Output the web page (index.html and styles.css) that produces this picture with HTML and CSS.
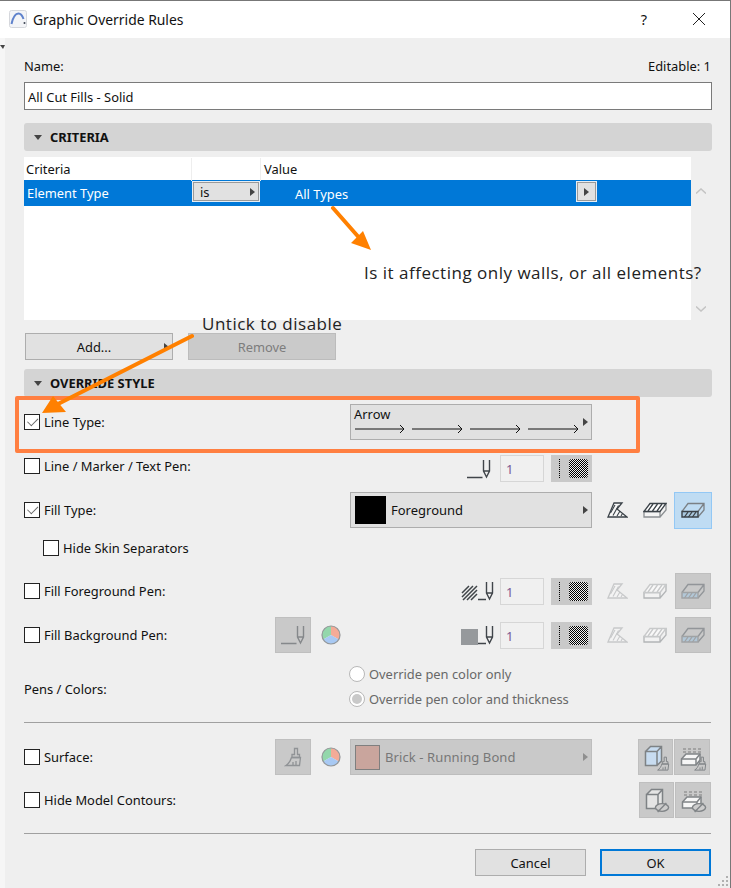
FILE: index.html
```html
<!DOCTYPE html>
<html lang="en">
<head>
<meta charset="utf-8">
<title>Graphic Override Rules</title>
<link rel="stylesheet" href="styles.css">
</head>
<body>
<svg class="sprite" aria-hidden="true">
  <symbol id="pen" viewBox="0 0 24 20">
    <path d="M0 18.500H15.500M16.500 1V12L19.500 18L22.500 12V1M16.500 12H22.500" fill="none" stroke="currentColor" stroke-width="1.400"/>
  </symbol>
  <symbol id="pen-short" viewBox="0 0 16 20">
    <path d="M0 18.500H8M8.500 1V12L11.500 18L14.500 12V1M8.500 12H14.500" fill="none" stroke="currentColor" stroke-width="1.400"/>
  </symbol>
  <symbol id="cut" viewBox="0 0 21 16">
    <path d="M1 15L7 1H15L10 7L20 15Z" fill="#fff" fill-opacity=".5" stroke="currentColor" stroke-width="1.300"/>
    <path d="M3.500 11L8 3M6 13.500L11.500 3.500M10 14L13 9M14 14L15.500 11.500" fill="none" stroke="currentColor" stroke-width="1.100"/>
  </symbol>
  <symbol id="top" viewBox="0 0 24 16">
    <path d="M1 9.500H17V15H1ZM17 15L23 8V1" fill="#f4f4f4" stroke="#8b8f92" stroke-width="1.300"/>
    <path d="M1 9.500L7 1.500H23L17 9.500Z" fill="#fff" stroke="currentColor" stroke-width="1.300"/>
    <path d="M5 9L10 2M9.500 9L14.500 2M14 9L19 2" stroke="currentColor" stroke-width="1.300"/>
  </symbol>
  <symbol id="front" viewBox="0 0 24 16">
    <path d="M1 9.500L7 1.500H23V8L17 15M17 9.500L23 1.500" fill="none" stroke="#7b8085" stroke-width="1.300"/>
    <path d="M1 9.500H17V15H1Z" fill="#a9c7dd" stroke="currentColor" stroke-width="1.400"/>
    <path d="M3.500 15L7 10M7.500 15L11 10M11.500 15L15 10" stroke="currentColor" stroke-width="1.300"/>
  </symbol>
  <symbol id="brush" viewBox="0 0 18 21">
    <path d="M10.500 1.500H13.500V7.500H15.500V10.500H8V7.500H10.500Z" fill="none" stroke="currentColor" stroke-width="1.300"/>
    <path d="M7.500 10.500H16.500L15.500 18.500H2C5 16.500 6.500 14 7.500 10.500ZM9 18V15M12 18V14" fill="none" stroke="currentColor" stroke-width="1.300"/>
  </symbol>
  <symbol id="wheel" viewBox="0 0 20 20">
    <path d="M10 10V1A9 9 0 0 0 2.200 14.500Z" fill="#8fd6a8"/>
    <path d="M10 10V1A9 9 0 0 1 17.800 14.500Z" fill="#f5a893"/>
    <path d="M10 10L2.200 14.500A9 9 0 0 0 17.800 14.500Z" fill="#a5c8f4"/>
    <circle cx="10" cy="10" r="9" fill="none" stroke="#8f9396" stroke-width="1.200"/>
  </symbol>
  <symbol id="cube" viewBox="0 0 24 24">
    <path d="M1.500 6.500L6.500 1.500H17.500V16L13 20.500H1.500Z" fill="currentColor"/>
    <path d="M1.500 6.500H13V20.500H1.500ZM1.500 6.500L6.500 1.500H17.500V16L13 20.500M13 6.500L17.500 1.500" fill="none" stroke="#7e8285" stroke-width="1.500"/>
  </symbol>
  <symbol id="slab" viewBox="0 0 24 24">
    <path d="M3 4H21M3 7H21" stroke="#a3a3a3" stroke-width="2" stroke-dasharray="3 2"/>
    <path d="M1.500 14L6 9H20V15L16 20H1.500Z" fill="#f6f6f6" stroke="#808487" stroke-width="1.500"/>
    <path d="M1.500 14H16V20M16 14L20 9" fill="none" stroke="#808487" stroke-width="1.500"/>
  </symbol>
  <symbol id="hide" viewBox="0 0 14 10">
    <ellipse cx="7" cy="5" rx="6" ry="3.500" fill="#cdcdcd" stroke="#808487" stroke-width="1.300"/>
    <path d="M3 9L11 1" stroke="#808487" stroke-width="1.300"/>
  </symbol>
</svg>

<div class="window">
  <header class="titlebar">
    <svg class="app-icon" viewBox="0 0 18 18"><rect x=".5" y=".5" width="17" height="17" rx="2" fill="#f3f4f7" stroke="#d5d7dc"/><path d="M2.500 14C4 7 7 3.500 9.500 3.500C12 3.500 13.500 6 14.500 9" fill="none" stroke="#5f82cc" stroke-width="2"/><circle cx="15.500" cy="13" r="1" fill="#3c4452"/></svg>
    <span class="title">Graphic Override Rules</span>
    <span class="help">?</span>
    <svg class="close" viewBox="0 0 14 14"><path d="M1 1L13 13M13 1L1 13" stroke="#222" stroke-width="1"/></svg>
  </header>

  <div class="body">
    <aside class="strip"><i class="strip-mark"></i></aside>
    <main class="content">
      <div class="name-row"><span>Name:</span><span>Editable: 1</span></div>
      <div class="text-field">All Cut Fills - Solid</div>

      <div class="section section-criteria"><i class="down"></i><b>CRITERIA</b></div>

      <div class="criteria">
        <div class="list">
          <div class="list-head">
            <span class="col-a">Criteria</span><span class="col-b"></span><span class="col-c">Value</span>
          </div>
          <div class="list-row">
            <span class="col-a">Element Type</span>
            <span class="cell-btn wide">is<i class="right"></i></span>
            <span class="value">All Types</span>
            <span class="cell-btn small"><i class="right"></i></span>
          </div>
        </div>
        <div class="scroll">
          <svg class="chev" viewBox="0 0 10 6"><path d="M0 5.500L5 1L10 5.500" fill="none" stroke="#c4c4c4" stroke-width="1.500"/></svg>
          <svg class="chev" viewBox="0 0 10 6"><path d="M0 .5L5 5L10 .5" fill="none" stroke="#c4c4c4" stroke-width="1.500"/></svg>
        </div>
      </div>

      <div class="list-actions">
        <div class="btn add">Add...<i class="right"></i></div>
        <div class="btn remove">Remove</div>
      </div>

      <div class="section section-override"><i class="down"></i><b>OVERRIDE STYLE</b></div>

      <div class="row row-line">
        <label class="check-label"><i class="check on"></i>Line Type:</label>
        <div class="main">
          <div class="select arrow-select">
            <div class="arrow-body">
              <span class="arrow-name">Arrow</span>
              <svg class="arrows" viewBox="0 0 224 9"><path d="M0 5H49M45 1L49 5L45 9M57 5H107M103 1L107 5L103 9M115 5H165M161 1L165 5L161 9M173 5H223M219 1L223 5L219 9" fill="none" stroke="#111" stroke-width="1"/></svg>
            </div>
            <i class="right"></i>
          </div>
        </div>
      </div>

      <div class="row row-pen">
        <label class="check-label"><i class="check"></i>Line / Marker / Text Pen:</label>
        <div class="main pen-tools">
          <svg class="ico-pen"><use href="#pen"/></svg>
          <span class="num">1</span>
          <span class="toggle"><i class="dots"></i><i class="checker"></i></span>
        </div>
      </div>

      <div class="row row-fill">
        <label class="check-label"><i class="check on"></i>Fill Type:</label>
        <div class="main">
          <div class="select"><i class="swatch black"></i><span class="select-text">Foreground</span><i class="right"></i></div>
        </div>
        <div class="tools">
          <span class="tool"><svg class="ico-cut"><use href="#cut"/></svg></span>
          <span class="tool"><svg class="ico-box"><use href="#top"/></svg></span>
          <span class="tool active"><svg class="ico-box"><use href="#front"/></svg></span>
        </div>
      </div>

      <div class="row-skin">
        <label class="check-label"><i class="check"></i>Hide Skin Separators</label>
      </div>

      <div class="row row-fg">
        <label class="check-label"><i class="check"></i>Fill Foreground Pen:</label>
        <div class="main pen-tools">
          <svg class="ico-hatch" viewBox="0 0 17 16"><path d="M1 8L8 1M1 12L12 1M2 15L16 1M6 15L16 5M10 15L16 9" stroke="#3f4448" stroke-width="1.500"/></svg>
          <svg class="ico-short"><use href="#pen-short"/></svg>
          <span class="num">1</span>
          <span class="toggle"><i class="dots"></i><i class="checker"></i></span>
        </div>
        <div class="tools dim">
          <span class="tool"><svg class="ico-cut"><use href="#cut"/></svg></span>
          <span class="tool"><svg class="ico-box"><use href="#top"/></svg></span>
          <span class="tool off"><svg class="ico-box"><use href="#front"/></svg></span>
        </div>
      </div>

      <div class="row row-bg">
        <label class="check-label"><i class="check"></i>Fill Background Pen:</label>
        <span class="tool off pen-btn"><svg class="ico-pen"><use href="#pen"/></svg></span>
        <svg class="wheel"><use href="#wheel"/></svg>
        <div class="main pen-tools">
          <i class="gray-box"></i>
          <svg class="ico-short"><use href="#pen-short"/></svg>
          <span class="num">1</span>
          <span class="toggle"><i class="dots"></i><i class="checker"></i></span>
        </div>
        <div class="tools dim">
          <span class="tool"><svg class="ico-cut"><use href="#cut"/></svg></span>
          <span class="tool"><svg class="ico-box"><use href="#top"/></svg></span>
          <span class="tool off"><svg class="ico-box"><use href="#front"/></svg></span>
        </div>
      </div>

      <div class="row row-pens">
        <span class="pens-label">Pens / Colors:</span>
        <div class="main radios">
          <label class="radio-label"><i class="radio"></i>Override pen color only</label>
          <label class="radio-label"><i class="radio on"></i>Override pen color and thickness</label>
        </div>
      </div>

      <hr class="rule rule-a">

      <div class="row row-surface">
        <label class="check-label"><i class="check"></i>Surface:</label>
        <span class="tool off pen-btn"><svg class="ico-brush"><use href="#brush"/></svg></span>
        <svg class="wheel"><use href="#wheel"/></svg>
        <div class="main">
          <div class="select select-off"><i class="swatch brick"></i><span class="select-text">Brick - Running Bond</span><i class="right"></i></div>
        </div>
        <div class="tools pair">
          <span class="tool off stack"><svg class="ico-cube blue"><use href="#cube"/></svg><svg class="mini-brush"><use href="#brush"/></svg></span>
          <span class="tool off stack"><svg class="ico-cube"><use href="#slab"/></svg><svg class="mini-brush"><use href="#brush"/></svg></span>
        </div>
      </div>

      <div class="row row-model">
        <label class="check-label"><i class="check"></i>Hide Model Contours:</label>
        <div class="tools pair">
          <span class="tool off stack"><svg class="ico-cube pale"><use href="#cube"/></svg><svg class="mini-hide"><use href="#hide"/></svg></span>
          <span class="tool off stack"><svg class="ico-cube"><use href="#slab"/></svg><svg class="mini-hide"><use href="#hide"/></svg></span>
        </div>
      </div>

      <hr class="rule rule-b">

      <div class="footer">
        <div class="btn cancel">Cancel</div>
        <div class="btn ok">OK</div>
      </div>
    </main>
  </div>

  <svg class="grip" viewBox="0 0 12 12"><path d="M9 0h2v2H9zM5 4h2v2H5zM9 4h2v2H9zM1 8h2v2H1zM5 8h2v2H5zM9 8h2v2H9z" fill="#b0b0b0"/></svg>

  <div class="callout-box"></div>
  <svg class="callout-arrows" viewBox="0 0 731 888">
    <path d="M333 208L362 241M192 336L56 405" fill="none" stroke="#ff8000" stroke-width="4" stroke-linecap="round"/>
    <path d="M371 250L351 243L363 231ZM42 413L53 396L66 412Z" fill="#ff8000"/>
  </svg>
  <span class="note note-walls">Is it affecting only walls, or all elements?</span>
  <span class="note note-untick">Untick to disable</span>
</div>
</body>
</html>
```

FILE: styles.css
```css
* { box-sizing: border-box; }
html, body { margin: 0; padding: 0; }
body {
  width: 731px;
  height: 888px;
  overflow: hidden;
  font-family: "Noto Sans", "Open Sans", sans-serif;
  font-size: 12.900px;
  color: #111;
  background: #efefef;
}
i { display: block; flex: none; }
.sprite { position: absolute; width: 0; height: 0; }

.window {
  position: relative;
  width: 731px;
  height: 888px;
  border-top: 1px solid #777;
  border-right: 1px solid #777;
  overflow: hidden;
}

.titlebar {
  display: flex;
  align-items: center;
  height: 37px;
  background: #fff;
  padding: 0 18px 1px 9px;
}
.app-icon { width: 18px; height: 18px; }
.title { margin-left: 6px; font-size: 13.900px; flex: 1; }
.help { font-size: 14.500px; margin-right: 45px; }
.close { width: 14px; height: 14px; margin-right: 6px; }

.body { display: flex; height: 850px; }
.strip { width: 5px; background: #f6f6f6; position: relative; }
.strip-mark {
  margin-top: 7px;
  width: 0; height: 0;
  border-left: 3px solid transparent;
  border-right: 2px solid transparent;
  border-top: 4px solid #444;
}
.content {
  width: 707px;
  padding-left: 19px;
  flex: none;
}

.name-row {
  display: flex;
  justify-content: space-between;
  align-items: center;
  height: 18px;
  margin-top: 19px;
  padding-right: 1px;
}
.text-field {
  height: 28px;
  margin-top: 7px;
  border: 1px solid #7a7a7a;
  background: #fff;
  padding-left: 3px;
  line-height: 28px;
  width: 688px;
}

.section {
  display: flex;
  align-items: center;
  width: 688px;
  height: 28px;
  background: #d4d4d4;
  border-radius: 3px;
  padding-left: 10px;
}
.section b { margin-left: 8px; font-weight: 700; font-size: 12.900px; }
.section-criteria { margin-top: 13px; }
.section-override { margin-top: 9px; }
.down {
  width: 0; height: 0;
  border-left: 4px solid transparent;
  border-right: 4px solid transparent;
  border-top: 5px solid #444;
}
.right {
  width: 0; height: 0;
  border-top: 4px solid transparent;
  border-bottom: 4px solid transparent;
  border-left: 5px solid #444;
}

.criteria { display: flex; margin-top: 6px; height: 163px; }
.list { width: 667px; background: #fff; }
.list-head { display: flex; height: 23px; align-items: center; padding-top: 1px; }
.col-a { width: 167px; padding-left: 2px; }
.col-b { width: 70px; height: 23px; border-left: 1px solid #eee; border-right: 1px solid #eee; }
.col-c { padding-left: 3px; }
.list-row {
  display: flex;
  align-items: center;
  height: 26px;
  background: #0078d7;
  color: #fff;
}
.list-row .col-a { width: 168px; padding-left: 3px; }
.cell-btn {
  display: flex;
  align-items: center;
  height: 21px;
  background: #e1e1e1;
  border: 1px solid #e8eef4;
  box-shadow: inset 0 0 0 1px #9a9a9a;
  color: #111;
  margin-bottom: 3px;
}
.cell-btn.wide { width: 68px; padding: 0 4px 0 7px; justify-content: space-between; }
.cell-btn.small { width: 21px; justify-content: center; margin-right: 94px; }
.value { flex: 1; padding-left: 35px; padding-top: 2px; }
.scroll {
  width: 20px;
  padding: 31px 0 8px;
  display: flex;
  flex-direction: column;
  justify-content: space-between;
  align-items: center;
}
.chev { width: 10px; height: 6px; }

.list-actions { display: flex; margin-top: 13px; margin-left: 1px; gap: 15px; }
.btn {
  display: flex;
  align-items: center;
  justify-content: center;
  height: 27px;
  width: 148px;
  background: #e1e1e1;
  border: 1px solid #adadad;
  position: relative;
}
.btn .right { position: absolute; right: 3px; top: 9px; }
.add { padding-right: 10px; }
.remove { background: #cacaca; color: #7d7d7d; border-color: #bcbcbc; padding-top: 1px; }

.row {
  display: flex;
  align-items: center;
  height: 36px;
  width: 687px;
}
.check-label { display: flex; align-items: center; width: 251px; flex: none; }
.check {
  position: relative;
  width: 16px;
  height: 16px;
  margin-right: 4px;
  background: #fff;
  border: 1px solid #222;
}
.check.on::after {
  content: "";
  position: absolute;
  left: 2px;
  top: 1.500px;
  width: 9px;
  height: 5px;
  border-left: 1.500px solid #666;
  border-bottom: 1.500px solid #666;
  transform: rotate(-45deg) translate(0, 1px);
}
.main { width: 242px; margin-left: 75px; flex: none; }
.pen-btn + .wheel + .main { margin-left: 9px; }
.pen-btn { margin-right: 10px; }

.select {
  display: flex;
  align-items: center;
  height: 36px;
  background: #e1e1e1;
  border: 1px solid #adadad;
  padding: 0 3px 0 4px;
}
.select-text { flex: 1; margin-left: 5px; font-size: 13px; }
.select-off .select-text { letter-spacing: .1px; }
.swatch { width: 31px; height: 28px; }
.black { background: #000; }
.brick { width: 25px; height: 25px; background: #c9a59d; border: 1px solid #7f7f7f; }
.select-off { background: #c9c9c9; border-color: #bdbdbd; color: #777; }
.select-off .right { border-left-color: #8f8f8f; }
.arrow-select { padding: 0 3px 0 4px; }
.arrow-body { flex: 1; display: flex; flex-direction: column; }
.arrow-name { line-height: 14px; margin-top: -5px; margin-left: -1px; }
.arrows { width: 224px; height: 9px; margin-top: 3px; display: block; }

.row-line { margin-top: 7px; }
.row-pen { margin-top: 8px; }
.row-fill { margin-top: 8px; }
.row-skin { margin-top: 10px; height: 20px; margin-left: 19px; display: flex; align-items: center; }
.row-skin .check-label { width: auto; }
.row-fg { margin-top: 15px; }
.row-bg { margin-top: 8px; }
.row-pens { margin-top: 9px; height: 50px; }
.row-surface { margin-top: 16px; }
.row-model { margin-top: 7px; justify-content: space-between; }

.pen-tools {
  display: flex;
  align-items: center;
  justify-content: flex-end;
  height: 27px;
}
.row-pen .pen-tools { align-self: flex-end; margin-bottom: 2px; }
.ico-pen { width: 24px; height: 20px; margin-right: 9px; color: #40454a; }
.ico-short { width: 16px; height: 20px; margin-right: 6px; color: #40454a; }
.num {
  width: 44px;
  height: 27px;
  margin-right: 7px;
  padding-left: 5px;
  line-height: 26px;
  color: #7a5a94;
  background: #f0f0f0;
  border: 1px solid #d6d6d6;
}
.toggle {
  display: flex;
  align-items: center;
  width: 41px;
  height: 27px;
  background: #c9c9c9;
  padding-left: 8px;
}
.dots { height: 19px; border-left: 1px dotted #000; }
.checker {
  width: 19px;
  height: 19px;
  margin-left: 9px;
  border-radius: 3px;
  background: conic-gradient(#000 25%, #f0f0f0 0 50%, #000 0 75%, #f0f0f0 0) 0 0 / 2px 2px;
}
.ico-hatch { width: 17px; height: 16px; margin-top: 4px; }
.gray-box { width: 17px; height: 16px; margin-top: 4px; background: #96999c; }

.tools { display: flex; margin-left: 6px; }
.tool {
  display: flex;
  align-items: center;
  justify-content: center;
  width: 38px;
  height: 36px;
  color: #3b4248;
  flex: none;
}
.tool.active {
  background: #bfdcf3;
  border: 1px solid #93c8f5;
  height: 37px;
}
.tool.off {
  background: #c9c9c9;
  border: 1px solid #bfbfbf;
  color: #8a8d90;
  width: 36px;
  margin: 0 1px;
}
.ico-cut { width: 21px; height: 16px; }
.ico-box { width: 24px; height: 16px; }
.dim .tool { color: #aeb0b2; }
.dim .tool.off { color: #909396; }
.dim svg { opacity: .6; }
.dim .off svg { opacity: .7; }
.tool.pen-btn { margin: 0 10px 0 0; }
.pen-btn .ico-pen { margin: 0; color: #85888b; }
.ico-brush { width: 18px; height: 21px; color: #909396; }
.wheel { width: 20px; height: 20px; flex: none; margin-left: 0; opacity: .95; }

.pens-label { width: 326px; flex: none; padding-top: 4px; }
.radios { display: flex; flex-direction: column; margin-left: -1px; margin-top: -2px; }
.radio-label { display: flex; align-items: center; height: 25px; color: #686868; }
.radio {
  position: relative;
  width: 16px;
  height: 16px;
  margin-right: 4px;
  border-radius: 50%;
  border: 1px solid #b8b8b8;
  background: #fff;
}
.radio.on::after {
  content: "";
  position: absolute;
  inset: 2px;
  border-radius: 50%;
  background: #c9c9c9;
}

.rule { margin: 0; border: 0; height: 1px; width: 687px; background: #a0a0a0; }
.rule-a { margin-top: 10px; }
.rule-b { margin-top: 15px; }

.pair { margin-left: 46px; gap: 1px; }
.row-model .pair { margin-left: 0; }
.pair .tool.off { margin: 0; width: 35px; }
.pair .tool.off + .tool.off { width: 36px; }
.stack { position: relative; }
.ico-cube { width: 24px; height: 24px; color: transparent; }
.ico-cube.blue { color: #c8dcf0; }
.ico-cube.pale { color: #e4e4e4; }
.mini-brush { position: absolute; right: 2px; bottom: 2px; width: 14px; height: 16px; color: #808487; }
.mini-hide { position: absolute; right: 3px; bottom: 4px; width: 16px; height: 11px; }

.footer { display: flex; justify-content: flex-end; gap: 14px; margin-top: 15px; width: 687px; }
.cancel, .ok { width: 111px; height: 27px; }
.ok { border: 2px solid #0078d7; }

.grip { position: absolute; right: 1px; bottom: 0; width: 12px; height: 12px; }

.callout-box {
  position: absolute;
  left: 15px;
  top: 395px;
  width: 625px;
  height: 57px;
  border: 4px solid #ff7f41;
  border-radius: 2px;
}
.callout-arrows { position: absolute; left: 0; top: -1px; width: 731px; height: 888px; pointer-events: none; }
.note { position: absolute; font-family: "Open Sans", sans-serif; font-size: 17px; letter-spacing: .5px; color: #222; white-space: nowrap; }
.note-walls { left: 364px; top: 260px; }
.note-untick { left: 202px; top: 311px; }
```
